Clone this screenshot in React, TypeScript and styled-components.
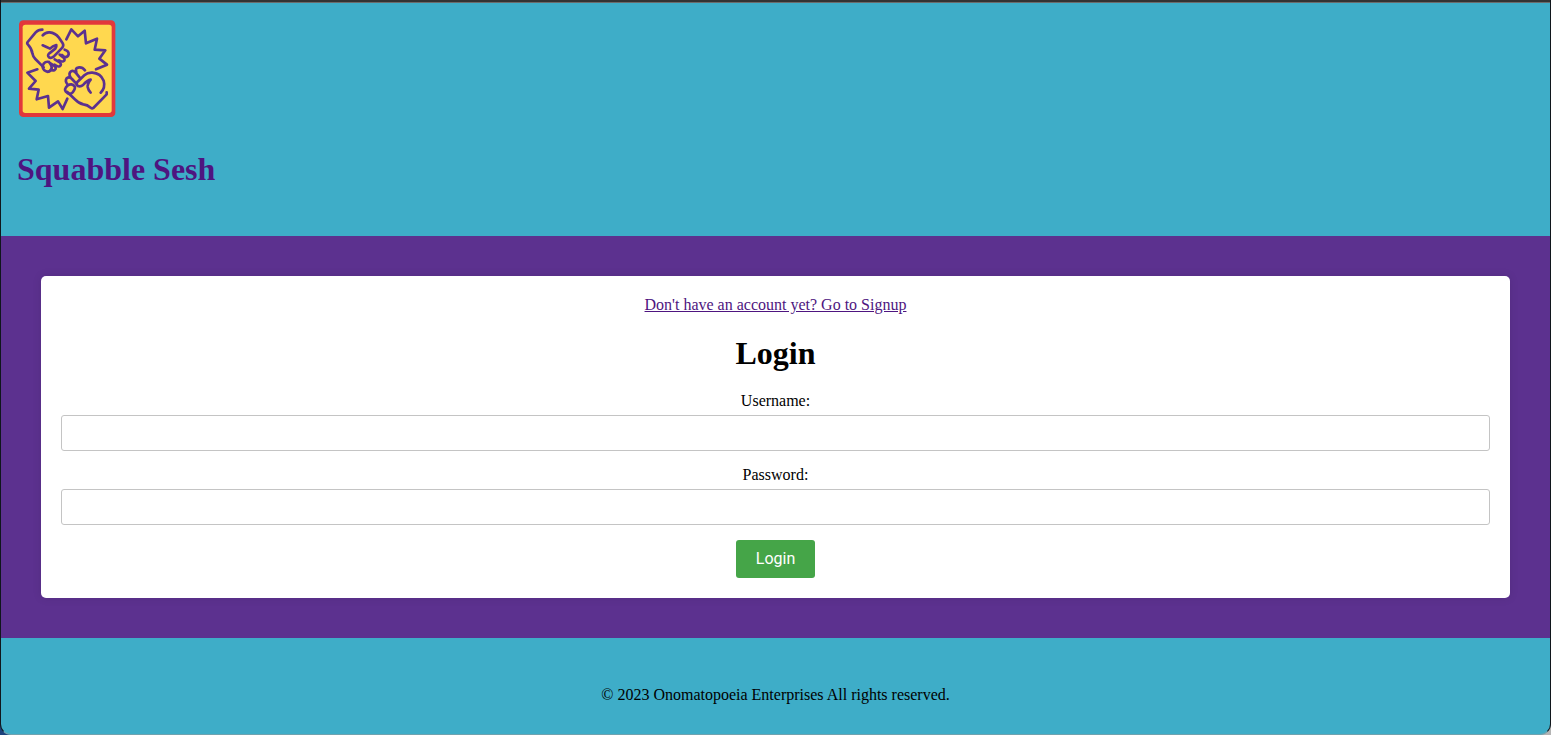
import React from "react";
import styled, { createGlobalStyle } from "styled-components";

const GlobalStyle = createGlobalStyle`
  *, *::before, *::after { box-sizing: border-box; }
  body {
    margin: 0;
    background: linear-gradient(90deg, #1c427c 50%, #b4b4b4 50%);
    font-family: "Liberation Serif", "Times New Roman", serif;
    font-size: 16px;
    line-height: 18px;
    color: #000;
  }
`;

const Frame = styled.div`
  display: flex;
  flex-direction: column;
  min-height: 100vh;
  border: 1px solid #10161c;
  border-top: 0;
  border-bottom-color: #6fa3b0;
  border-radius: 0 0 11px 11px;
  background: #3eadc8;
  overflow: hidden;
`;

const TopEdge = styled.div`
  height: 3px;
  background: #333;
  border-bottom: 1px solid #6b6b6b;
`;

const Header = styled.header`
  display: flex;
  flex-direction: column;
  align-items: flex-start;
  gap: 32px;
  padding: 16px 16px 48px;
`;

const Logo = styled.svg`
  display: block;
  width: 100px;
  height: 100px;
`;

const Title = styled.h1`
  margin: 0;
  font-size: 32px;
  line-height: 37px;
`;

const BrandLink = styled.a`
  color: #4e1580;
  text-decoration: none;
`;

const Main = styled.main`
  padding: 40px;
  background: #5c318f;
`;

const Card = styled.form`
  display: flex;
  flex-direction: column;
  align-items: center;
  padding: 20px;
  border-radius: 5px;
  background: #fff;
  box-shadow: 0 0 10px rgba(0, 0, 0, 0.1);
`;

const SignupLink = styled.a`
  color: #4e1580;
`;

const FormTitle = styled(Title)`
  margin: 21px 0 20px;
`;

const Field = styled.div`
  display: flex;
  flex-direction: column;
  align-items: center;
  gap: 5px;
  width: 100%;
  margin-bottom: 15px;
`;

const Input = styled.input`
  width: 100%;
  height: 36px;
  padding: 8px;
  border: 1px solid #c4c4c4;
  border-radius: 3px;
  background: #fff;
  font: inherit;
`;

const SubmitButton = styled.button`
  height: 38px;
  padding: 0 20px;
  border: 0;
  border-radius: 3px;
  background: #45a548;
  color: #fff;
  font-family: Roboto, "Liberation Sans", Arial, sans-serif;
  font-size: 16px;
  line-height: 18px;
  cursor: pointer;
`;

const Footer = styled.footer`
  padding: 48px 16px 30px;
  text-align: center;
`;

const FistsLogo = () => (
  <Logo viewBox="21 21 300 300" role="img" aria-label="Squabble Sesh logo">
    <rect x="27" y="25" width="289" height="290" rx="13" fill="#e2383b" />
    <rect x="38" y="38" width="267" height="265" rx="8" fill="#ffd84f" />
    <g
      fill="none"
      stroke="#5c318f"
      strokeWidth="8"
      strokeLinecap="round"
      strokeLinejoin="round"
    >
      {/* upper left fist */}
      <path d="M97 53 Q85 53 77 61 L53 90 Q50 94 54 98 Q66 111 67 124 Q69 134 76 141 L101 166" />
      <path d="M98 70 Q106 60 119 61 Q136 63 146 76 L158 94 Q162 100 157 107 L131 134 Q123 140 117 136 Q111 130 118 124 L136 110 Q140 103 139 99 Q128 102 120 110 Q110 105 98 100" />
      <path d="M117 150 Q108 147 101 155 Q94 166 103 175 Q114 184 123 174 Q129 165 117 150" />
      <path d="M120 153 L131 160 Q142 168 134 174 Q128 177 122 173" />
      <path d="M134 142 L148 150 Q157 158 149 163 Q142 165 134 158" />
      <path d="M149 128 L161 137 Q167 145 160 148 Q154 150 147 145" />
      <path d="M164 113 Q177 117 176 127 Q173 137 163 135 L156 129" />
      {/* burst rays */}
      <path d="M169 82 L184 52 L204 73 L224 56 L228 94 L261 80 L254 113 L286 115 L268 140 L291 158 L258 172" />
      <path d="M82 172 L52 182 L77 207 L57 230 L86 233 L80 262 L114 252 L117 287 L144 268 L158 291 L172 260" />
      {/* lower right fist */}
      <path d="M290 241 L290 247 L250 288 Q246 291 242 287 Q232 278 220 277 Q205 274 196 263 L172 240" />
      <path d="M272 242 Q287 228 281 206 Q272 184 247 182 Q233 181 223 190 L202 210 Q197 218 204 222 Q212 225 220 218 Q232 205 242 203 Q232 216 233 225 Q235 235 242 242" />
      <path d="M184 217 Q175 216 168 226 Q161 236 172 243 Q180 249 188 241 Q197 230 194 223 Q190 218 184 217 Z" />
      <path d="M173 218 Q164 208 170 199 Q178 192 186 201 L199 215" />
      <path d="M181 195 Q175 184 183 178 Q191 174 199 184 L211 199" />
      <path d="M199 180 Q195 169 204 167 Q216 164 225 175" />
    </g>
  </Logo>
);

export default function App() {
  return (
    <>
      <GlobalStyle />
      <Frame>
        <TopEdge />
        <Header>
          <FistsLogo />
          <Title>
            <BrandLink href="#home">Squabble Sesh</BrandLink>
          </Title>
        </Header>
        <Main>
          <Card onSubmit={(event: React.FormEvent) => event.preventDefault()}>
            <SignupLink href="#signup">
              Don't have an account yet? Go to Signup
            </SignupLink>
            <FormTitle>Login</FormTitle>
            <Field>
              <label htmlFor="username">Username:</label>
              <Input id="username" type="text" autoComplete="username" />
            </Field>
            <Field>
              <label htmlFor="password">Password:</label>
              <Input
                id="password"
                type="password"
                autoComplete="current-password"
              />
            </Field>
            <SubmitButton type="submit">Login</SubmitButton>
          </Card>
        </Main>
        <Footer>© 2023 Onomatopoeia Enterprises All rights reserved.</Footer>
      </Frame>
    </>
  );
}
